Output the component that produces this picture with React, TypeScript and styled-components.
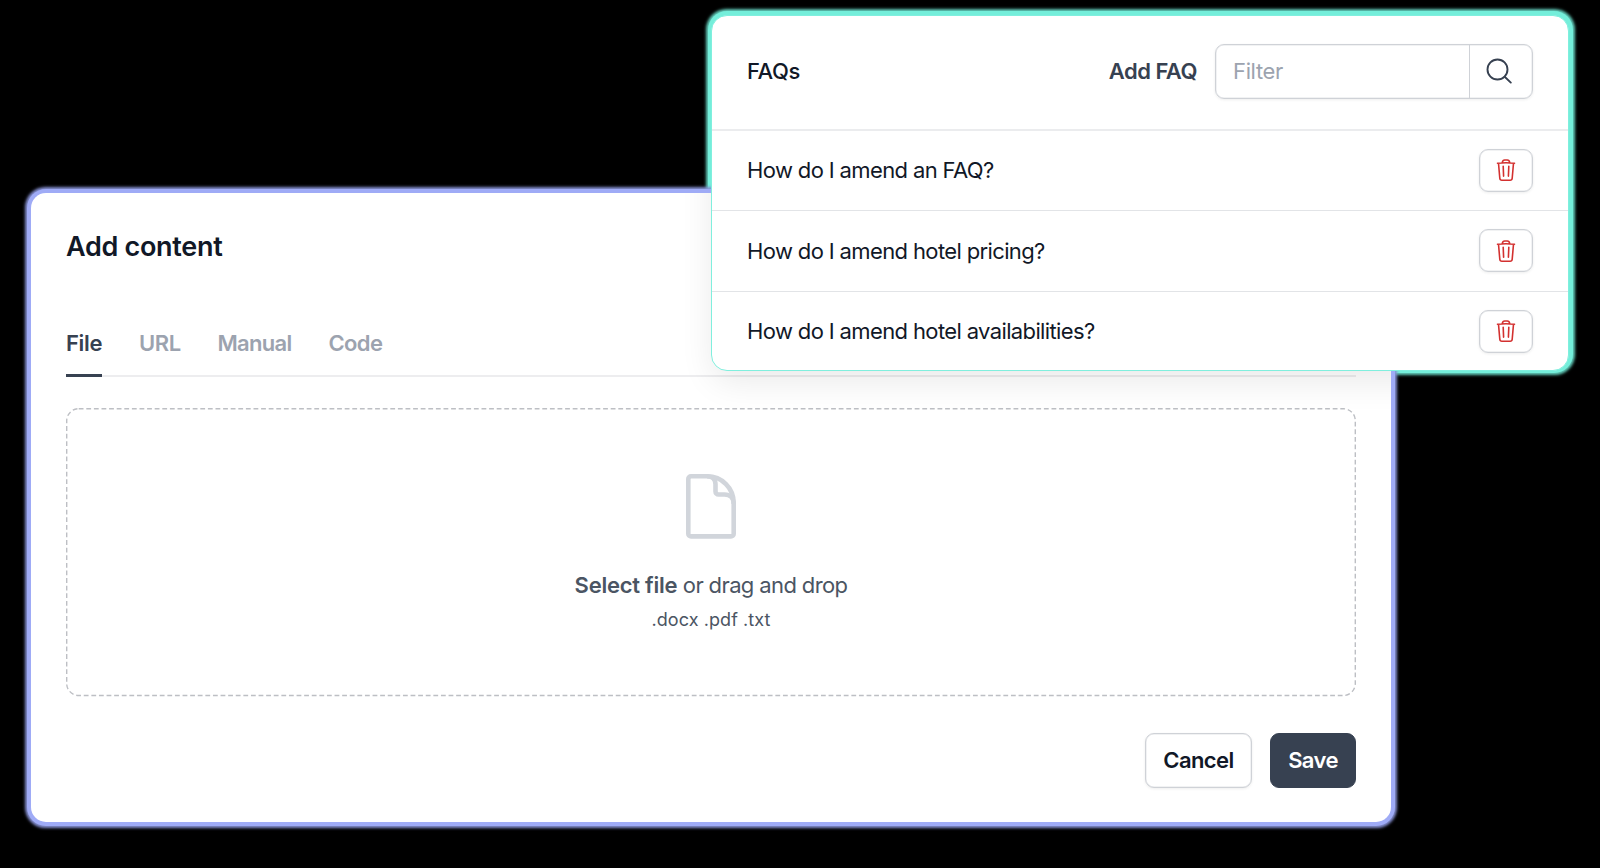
import React from "react";
import styled, { createGlobalStyle, css } from "styled-components";

const Global = createGlobalStyle`
  * { box-sizing: border-box; }
  body { margin: 0; background: #000; font-family: Inter, "Liberation Sans", sans-serif; font-size: 22px; color: #111827; }
  button, input { font: inherit; }
`;

const Stage = styled.main`
  position: relative;
  width: 1600px;
  height: 868px;
  overflow: hidden;
  background: #000;
`;

const Floating = styled.div<{ $x: number; $y: number; $w: number; $h: number }>`
  position: absolute;
  left: ${(p) => p.$x}px;
  top: ${(p) => p.$y}px;
  width: ${(p) => p.$w}px;
  height: ${(p) => p.$h}px;
`;

const Halo = styled(Floating)`
  background: #74eeda;
  border-radius: 15px;
  box-shadow: 0 0 0 4px #74eeda, 0 0 3px 5.5px #62cdbb;
`;

const ContentCard = styled(Floating)`
  display: flex;
  flex-direction: column;
  padding: 36px 35px 34px;
  background: #fff;
  border-radius: 15px;
  box-shadow: 0 0 0 4px #9fabf6, 0 0 3px 5.5px #8690d2;
`;

const ShadowClip = styled(Floating)`
  overflow: hidden;
  border-radius: 15px;
`;

const FaqShadow = styled(Floating)`
  border-radius: 16px;
  box-shadow: 0 12px 34px -1px rgba(0, 0, 0, 0.09);
`;

const FaqCard = styled(Floating)`
  display: flex;
  flex-direction: column;
  background: #fff;
  border-radius: 16px;
  border: 1px solid #80efde;
  overflow: hidden;
`;

const Title = styled.h1`
  margin: 0;
  font-size: 27px;
  line-height: 36px;
  font-weight: 600;
  letter-spacing: -0.3px;
`;

const Tabs = styled.nav`
  display: flex;
  flex: none;
  gap: 37px;
  height: 57px;
  margin-top: 55px;
  border-bottom: 2px solid #ededef;
`;

const Tab = styled.a<{ $active?: boolean; $w: number; $tracking: number }>`
  width: ${(p) => p.$w}px;
  height: 57px;
  padding-top: 9px;
  line-height: 28px;
  font-weight: 600;
  letter-spacing: ${(p) => p.$tracking}px;
  white-space: nowrap;
  color: #9ca3af;
  ${(p) =>
    p.$active &&
    css`
      color: #374151;
      border-bottom: 3px solid #374151;
    `}
`;

const DropZone = styled.div`
  position: relative;
  display: flex;
  flex: none;
  flex-direction: column;
  align-items: center;
  height: 288px;
  margin-top: 31px;
  padding-top: 66px;
  color: #4b5563;
`;

const DashedOutline = styled.svg`
  position: absolute;
  inset: 0;
  width: 100%;
  height: 100%;
  overflow: visible;
  pointer-events: none;
`;

const DropText = styled.p`
  margin: 30px 0 0;
  line-height: 32px;
  letter-spacing: -0.62px;
  b { font-weight: 600; letter-spacing: -0.25px; }
`;

const Formats = styled.p`
  margin: 5px 0 0;
  font-size: 18px;
  line-height: 28px;
  letter-spacing: 0.08px;
`;

const Actions = styled.div`
  display: flex;
  justify-content: flex-end;
  gap: 18px;
  margin-top: 37px;
`;

const Button = styled.button<{ $primary?: boolean; $w: number }>`
  width: ${(p) => p.$w}px;
  height: 55px;
  padding: 0 0 2px;
  font-weight: 600;
  letter-spacing: -0.6px;
  border-radius: 9px;
  border: 1px solid ${(p) => (p.$primary ? "#374151" : "#cfd2d7")};
  background: ${(p) => (p.$primary ? "#374151" : "#fff")};
  color: ${(p) => (p.$primary ? "#fff" : "#111827")};
  box-shadow: ${(p) => (p.$primary ? "none" : "inset 0 0 0 0.5px #e3e5e8, 0 1px 3px rgba(0, 0, 0, 0.07)")};
`;

const FaqHeader = styled.header`
  display: flex;
  flex: none;
  align-items: center;
  height: 115px;
  padding: 0 35px 2px;
  border-bottom: 2px solid #ebecee;
`;

const FaqTitle = styled.h2`
  flex: 1;
  margin: 0;
  padding-bottom: 1px;
  font-size: 22px;
  font-weight: 500;
  letter-spacing: -0.4px;
`;

const AddLink = styled.a`
  margin-right: 18px;
  padding-bottom: 1px;
  font-weight: 600;
  letter-spacing: -0.5px;
  color: #374151;
`;

const Search = styled.div`
  display: flex;
  width: 318px;
  height: 55px;
  border: 1px solid #cfd2d7;
  border-radius: 9px;
  box-shadow: inset 0 0 0 0.5px #e3e5e8, 0 1px 3px rgba(0, 0, 0, 0.07);
`;

const SearchInput = styled.input`
  flex: 1;
  min-width: 0;
  padding: 0 17px 2px;
  border: 0;
  outline: 0;
  background: transparent;
  letter-spacing: -0.35px;
  &::placeholder { color: #9ca3af; opacity: 1; }
`;

const SearchButton = styled.div`
  display: grid;
  place-items: center;
  width: 63px;
  padding: 0 5px 1px 0;
  border-left: 1px solid #cfd2d7;
`;

const Row = styled.div`
  display: flex;
  align-items: center;
  justify-content: space-between;
  flex: none;
  height: 79px;
  padding: 0 35px 1px;
  letter-spacing: -0.63px;
  & + & {
    height: 80.6px;
    padding-bottom: 0;
    border-top: 1.5px solid #e2e4e7;
  }
`;

const Remove = styled.div`
  display: grid;
  place-items: center;
  width: 54px;
  height: 43px;
  border: 1px solid #cfd2d7;
  border-radius: 9px;
  box-shadow: inset 0 0 0 0.5px #e3e5e8, 0 1px 3px rgba(0, 0, 0, 0.07);
`;

const Trash = () => (
  <svg width="20" height="24" viewBox="0 0 20 24" fill="none" stroke="#d3302f" strokeWidth="1.6" strokeLinecap="round" strokeLinejoin="round">
    <path d="M1.5 5.2C7 4.7 13 4.7 18.5 5.2M2.5 5.3l1.3 14.9c.1 1.2.9 2 2.1 2h8.2c1.200 0 2-.8 2.100-2l1.300-14.900M6.200 4.700c.3-1.700 1.100-2.700 2.500-2.700h2.600c1.400 0 2.200 1 2.500 2.700M7.200 8.300l.4 9.800M12.800 8.300l-.4 9.800" />
  </svg>
);

const FileIcon = () => (
  <svg width="50" height="65" viewBox="0 0 50 65" fill="none" stroke="#d1d5db" strokeWidth="4.6" strokeLinejoin="round">
    <path d="M5 2.3H21C36 2.3 47.7 14 47.7 29V59.7a2.7 2.7 0 0 1-2.7 2.7H5a2.7 2.7 0 0 1-2.7-2.7V5A2.7 2.7 0 0 1 5 2.3Z" />
    <path d="M21 2.3c5 0 8.5 3 8.5 8V17.5a3 3 0 0 0 3 3h6c5.5 0 9.2 3.5 9.2 9.5" />
  </svg>
);

const questions = ["How do I amend an FAQ?", "How do I amend hotel pricing?", "How do I amend hotel availabilities?"];

export default function App() {
  return (
    <Stage>
      <Global />
      <Halo $x={712} $y={15} $w={857} $h={354} />
      <ContentCard $x={31} $y={193} $w={1360} $h={629}>
        <Title>Add content</Title>
        <Tabs>
          <Tab $active $w={36} $tracking={-0.35}>File</Tab>
          <Tab $w={41.5} $tracking={-0.45}>URL</Tab>
          <Tab $w={74} $tracking={-0.7}>Manual</Tab>
          <Tab $w={54} $tracking={-0.65}>Code</Tab>
        </Tabs>
        <DropZone>
          <DashedOutline viewBox="0 0 1290 288" preserveAspectRatio="none">
            <rect x="0.7" y="0.7" width="1288.6" height="286.8" rx="12" fill="none" stroke="#bdbfc4" strokeWidth="1.4" strokeDasharray="4.8 2.8" />
          </DashedOutline>
          <FileIcon />
          <DropText><b>Select file</b> or drag and drop</DropText>
          <Formats>.docx .pdf .txt</Formats>
        </DropZone>
        <Actions>
          <Button $w={107}>Cancel</Button>
          <Button $primary $w={86}>Save</Button>
        </Actions>
      </ContentCard>
      <ShadowClip $x={31} $y={193} $w={1360} $h={629}>
        <FaqShadow $x={681} $y={-178} $w={857} $h={355} />
      </ShadowClip>
      <FaqCard $x={711} $y={15} $w={858} $h={356}>
        <FaqHeader>
          <FaqTitle>FAQs</FaqTitle>
          <AddLink>Add FAQ</AddLink>
          <Search>
            <SearchInput placeholder="Filter" />
            <SearchButton>
              <svg width="26" height="26" viewBox="0 0 26 26" fill="none" stroke="#374151" strokeWidth="1.9" strokeLinecap="round">
                <circle cx="11.5" cy="11.5" r="10" />
                <path d="M18.7 18.7 24.8 24.6" />
              </svg>
            </SearchButton>
          </Search>
        </FaqHeader>
        {questions.map((q) => (
          <Row key={q}>
            <span>{q}</span>
            <Remove><Trash /></Remove>
          </Row>
        ))}
      </FaqCard>
    </Stage>
  );
}
